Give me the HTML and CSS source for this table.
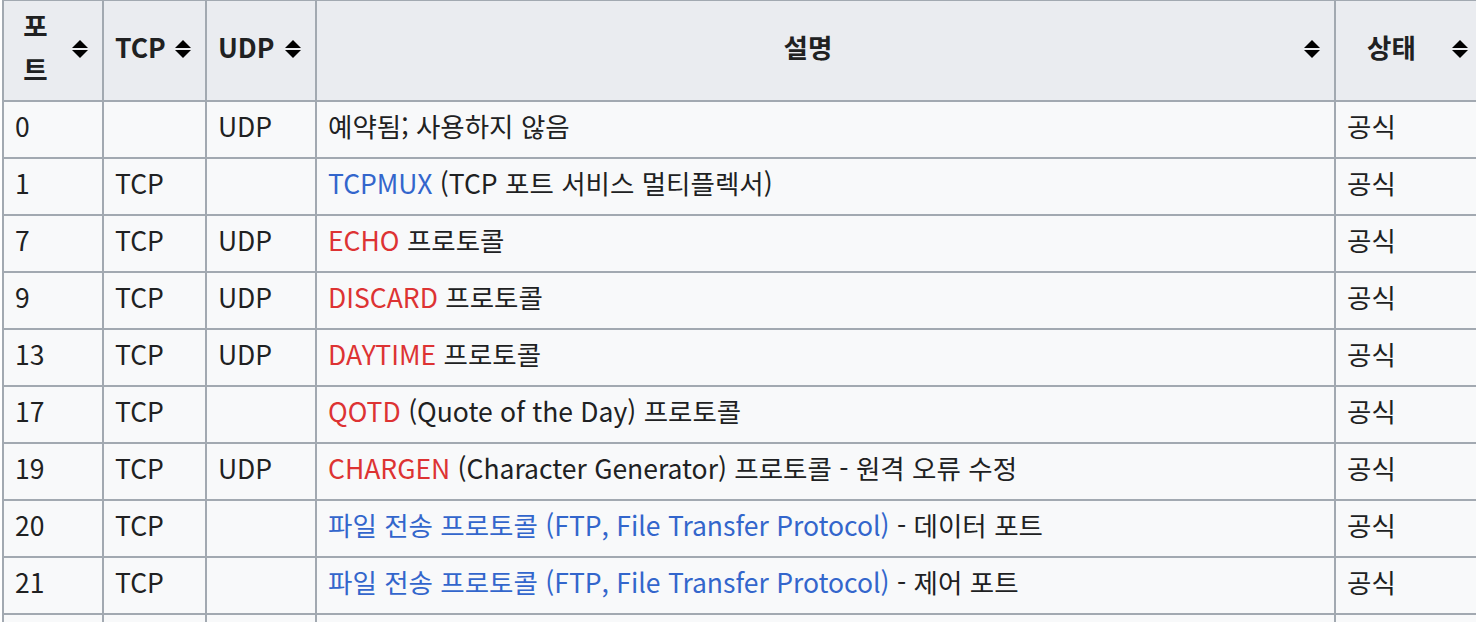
FILE: index.html
```html
<!DOCTYPE html>
<html lang="ko">
<head>
<meta charset="utf-8">
<title>포트 목록</title>
<link rel="stylesheet" href="styles.css">
</head>
<body>
<table class="ports">
  <colgroup>
    <col class="c-port">
    <col class="c-tcp">
    <col class="c-udp">
    <col class="c-desc">
    <col class="c-status">
  </colgroup>
  <thead>
    <tr>
      <th><div class="head"><span class="label">포트</span><svg class="sort" viewBox="0 0 16 18"><path d="M8 0L16 8H0Z M0 10H16L8 18Z"/></svg></div></th>
      <th><div class="head"><span class="label">TCP</span><svg class="sort" viewBox="0 0 16 18"><path d="M8 0L16 8H0Z M0 10H16L8 18Z"/></svg></div></th>
      <th><div class="head"><span class="label">UDP</span><svg class="sort" viewBox="0 0 16 18"><path d="M8 0L16 8H0Z M0 10H16L8 18Z"/></svg></div></th>
      <th><div class="head"><span class="label">설명</span><svg class="sort" viewBox="0 0 16 18"><path d="M8 0L16 8H0Z M0 10H16L8 18Z"/></svg></div></th>
      <th><div class="head"><span class="label">상태</span><svg class="sort" viewBox="0 0 16 18"><path d="M8 0L16 8H0Z M0 10H16L8 18Z"/></svg></div></th>
    </tr>
  </thead>
  <tbody>
    <tr><td>0</td><td></td><td>UDP</td><td>예약됨; 사용하지 않음</td><td>공식</td></tr>
    <tr><td>1</td><td>TCP</td><td></td><td><a class="link" href="#">TCPMUX</a> (TCP 포트 서비스 멀티플렉서)</td><td>공식</td></tr>
    <tr><td>7</td><td>TCP</td><td>UDP</td><td><a class="new" href="#">ECHO</a> 프로토콜</td><td>공식</td></tr>
    <tr><td>9</td><td>TCP</td><td>UDP</td><td><a class="new" href="#">DISCARD</a> 프로토콜</td><td>공식</td></tr>
    <tr><td>13</td><td>TCP</td><td>UDP</td><td><a class="new" href="#">DAYTIME</a> 프로토콜</td><td>공식</td></tr>
    <tr><td>17</td><td>TCP</td><td></td><td><a class="new" href="#">QOTD</a> (Quote of the Day) 프로토콜</td><td>공식</td></tr>
    <tr><td>19</td><td>TCP</td><td>UDP</td><td><a class="new" href="#">CHARGEN</a> (Character Generator) 프로토콜 - 원격 오류 수정</td><td>공식</td></tr>
    <tr><td>20</td><td>TCP</td><td></td><td><a class="link" href="#">파일 전송 프로토콜 (FTP, File Transfer Protocol)</a> - 데이터 포트</td><td>공식</td></tr>
    <tr><td>21</td><td>TCP</td><td></td><td><a class="link" href="#">파일 전송 프로토콜 (FTP, File Transfer Protocol)</a> - 제어 포트</td><td>공식</td></tr>
    <tr><td>22</td><td>TCP</td><td>UDP</td><td><a class="link" href="#">시큐어 셸 (SSH)</a> - ssh, scp, sftp같은 프로토콜 및 포트 포워딩</td><td>공식</td></tr>
  </tbody>
</table>
</body>
</html>
```

FILE: styles.css
```css
html, body {
  margin: 0;
  padding: 0;
  overflow: hidden;
  background: #ffffff;
}

body {
  font-family: "Noto Sans CJK KR", "Noto Sans", sans-serif;
  font-size: 26.5px;
  color: #202122;
}

.ports {
  border-collapse: collapse;
  table-layout: fixed;
  width: 1480px;
  margin: -1px 0 0 2px;
  background: #f8f9fa;
  border: 2px solid #a2a9b1;
}

.c-port { width: 100px; }
.c-tcp { width: 103px; }
.c-udp { width: 110px; }
.c-desc { width: 1019px; }
.c-status { width: 148px; }

.ports th,
.ports td {
  border: 2px solid #a2a9b1;
  padding: 1.5px 11px 9.5px 11px;
  line-height: 44px;
  text-align: left;
  vertical-align: middle;
}

.ports th {
  background: #eaecf0;
  font-weight: bold;
  padding-right: 14px;
}

.head {
  display: flex;
  align-items: center;
  gap: 16px;
}

.label {
  flex: 1;
  min-width: 0;
  text-align: center;
}

.sort {
  width: 16px;
  height: 18px;
  flex: none;
  fill: #000000;
  margin-top: 4px;
}

a {
  text-decoration: none;
}

.link { color: #3366cc; }
.new { color: #dd3333; }
```
